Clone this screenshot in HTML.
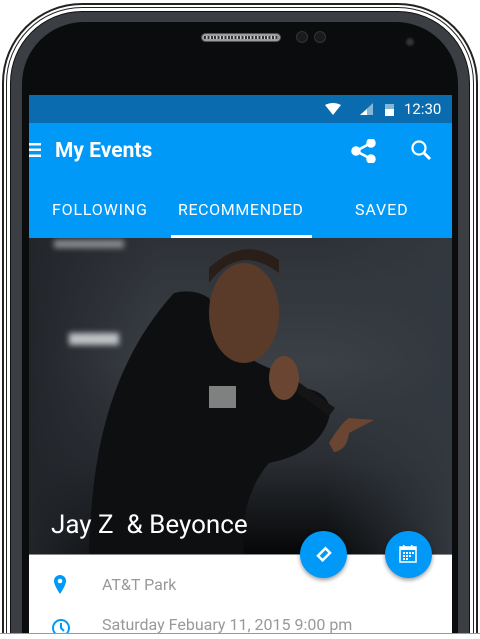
<!DOCTYPE html>
<html style="width:480px;height:639px;overflow:hidden"><head><style>
*{margin:0;padding:0;box-sizing:border-box}
body{width:480px;height:639px;overflow:hidden;background:#fff;position:relative;font-family:"Roboto","Liberation Sans",sans-serif}
.abs{position:absolute}
</style></head><body>
<div class="abs" style="left:0;top:0;width:480px;height:633px;overflow:hidden">
<div class="abs" style="left:2px;top:3px;width:476px;height:630px;border:2px solid #222;border-bottom:none;border-radius:80px 80px 0 0;background:#fff"></div>
<div class="abs" style="left:6px;top:7px;width:468px;height:626px;border:1.5px solid #222;border-bottom:none;border-radius:76px 76px 0 0;background:#fff"></div>
<div class="abs" style="left:10px;top:11px;width:460px;height:622px;border:1.5px solid #111;border-bottom:none;border-radius:72px 72px 0 0;background:#3b3e43"></div>
<div class="abs" style="left:22px;top:22px;width:436px;height:611px;border-radius:62px 62px 0 0;background:#0b0c0e"></div>
<div class="abs" style="left:201px;top:33px;width:80px;height:9px;border-radius:5px;background:#9a9ea3;border:1px solid #555"></div>
<div class="abs" style="left:204px;top:36px;width:74px;height:3px;background:repeating-linear-gradient(90deg,#333 0 2px,#ccc 2px 3.4px)"></div>
<div class="abs" style="left:296px;top:31px;width:12px;height:12px;border-radius:50%;background:#1a1b1e;border:1px solid #333"></div>
<div class="abs" style="left:314px;top:31px;width:12px;height:12px;border-radius:50%;background:#1a1b1e;border:1px solid #333"></div>
<div class="abs" style="left:405px;top:37px;width:10px;height:10px;border-radius:50%;background:#333;border:2px solid #1c1c1c"></div>
<div class="abs" style="left:29px;top:95px;width:423px;height:538px;background:#fff;overflow:hidden">
 <div class="abs" style="left:0;top:0;width:423px;height:28px;background:#0a6bae"></div>
 <svg class="abs" style="left:294px;top:7px" width="80" height="16">
  <path d="M2 3 Q10 -1 18 3 L10 13Z" fill="#fff"/>
  <path d="M37 13 L50 13 L50 1Z" fill="#fff" opacity=".5"/><path d="M37 13 L44 13 L44 7Z" fill="#fff"/>
  <rect x="62" y="2" width="9" height="12" fill="#fff" opacity=".5"/><rect x="62" y="7" width="9" height="7" fill="#fff"/>
 </svg>
 <div class="abs" style="left:375px;top:5px;color:#fff;font-size:15px">12:30</div>
 <div class="abs" style="left:0;top:28px;width:423px;height:115px;background:#0099f7"></div>
 <div class="abs" style="left:0;top:48px;width:12px;height:14px;background:linear-gradient(#fff 0 2.5px,transparent 2.5px 5.5px,#fff 5.5px 8px,transparent 8px 11.5px,#fff 11.5px 14px)"></div>
 <div class="abs" style="left:26px;top:44px;color:#fff;font-size:21px;font-weight:bold">My Events</div>
 <svg class="abs" style="left:322px;top:44px" width="28" height="24"><g fill="#fff" stroke="#fff" stroke-width="2.5"><line x1="5" y1="12" x2="20" y2="4"/><line x1="5" y1="12" x2="20" y2="20"/><circle cx="5" cy="12" r="3.5"/><circle cx="20" cy="4" r="3.5"/><circle cx="20" cy="20" r="3.5"/></g></svg>
 <svg class="abs" style="left:381px;top:44px" width="24" height="24"><circle cx="9" cy="9" r="6.5" fill="none" stroke="#fff" stroke-width="2.2"/><line x1="13.5" y1="13.5" x2="20" y2="20" stroke="#fff" stroke-width="3"/></svg>
 <div class="abs" style="left:23px;top:105px;color:#fff;font-size:16px;letter-spacing:.8px">FOLLOWING</div>
 <div class="abs" style="left:149px;top:105px;color:#fff;font-size:16px;letter-spacing:.6px">RECOMMENDED</div>
 <div class="abs" style="left:326px;top:105px;color:#fff;font-size:16px;letter-spacing:.9px">SAVED</div>
 <div class="abs" style="left:142px;top:140px;width:141px;height:3px;background:#fff"></div>
 <div class="abs" style="left:0;top:143px;width:423px;height:316px;overflow:hidden;background:linear-gradient(180deg,#2e3237 0%,#3b4046 40%,#2a2e33 70%,#060708 100%)">
  <div class="abs" style="left:0;top:0;width:423px;height:316px;background:linear-gradient(90deg,#22252a 0%,transparent 30%,transparent 70%,#32383f 100%)"></div>
  <div class="abs" style="left:40px;top:95px;width:50px;height:12px;background:#bfc2c4;filter:blur(3px)"></div>
  <div class="abs" style="left:25px;top:2px;width:70px;height:8px;background:#8a8d90;filter:blur(3px)"></div>
  <svg class="abs" style="left:0;top:0" width="423" height="316">
   <path d="M145 55 Q165 50 180 60 L195 100 Q215 120 240 130 L275 150 Q305 155 300 180 Q290 215 240 225 Q210 260 215 316 L60 316 Q62 240 75 190 Q95 110 145 55Z" fill="#0e0f11"/>
   <ellipse cx="215" cy="75" rx="35" ry="50" fill="#5a3a28"/>
   <path d="M180 45 Q210 5 250 35 L250 22 Q215 -3 180 30Z" fill="#2a1e18"/>
   <path d="M262 150 L300 178 L306 170 L268 143Z" fill="#151515"/>
   <ellipse cx="255" cy="140" rx="15" ry="22" fill="#6a4632"/>
   <path d="M300 205 Q312 185 320 180 L345 182 L320 195 Q318 212 305 214Z" fill="#6a4632"/>
   <rect x="180" y="148" width="27" height="22" fill="#ccc" opacity=".6"/>
  </svg>
  <div class="abs" style="left:22px;top:272px;color:#fff;font-size:26px">Jay Z &nbsp;&amp; Beyonce</div>
 </div>
 <div class="abs" style="left:0;top:459px;width:423px;height:1px;background:#888"></div>
 <div class="abs" style="left:271px;top:436px;width:47px;height:47px;border-radius:50%;background:#0099f7;box-shadow:0 2px 4px rgba(0,0,0,.4)"></div>
 <svg class="abs" style="left:283px;top:448px" width="24" height="24"><rect x="6" y="7" width="13" height="9" transform="rotate(-45 12 12)" fill="#fff"/><rect x="8.5" y="9.5" width="8" height="4" transform="rotate(-45 12 12)" fill="#0099f7"/></svg>
 <div class="abs" style="left:356px;top:436px;width:47px;height:47px;border-radius:50%;background:#0099f7;box-shadow:0 2px 4px rgba(0,0,0,.4)"></div>
 <svg class="abs" style="left:367px;top:447px" width="24" height="24"><rect x="4" y="5" width="16" height="15" fill="none" stroke="#fff" stroke-width="1.5"/><rect x="4" y="5" width="16" height="3" fill="#fff"/><rect x="7" y="3" width="1.5" height="4" fill="#fff"/><rect x="15" y="3" width="1.5" height="4" fill="#fff"/><g fill="#fff"><rect x="7" y="10" width="2" height="2"/><rect x="10" y="10" width="2" height="2"/><rect x="13" y="10" width="2" height="2"/><rect x="16" y="10" width="2" height="2"/><rect x="7" y="13" width="2" height="2"/><rect x="10" y="13" width="2" height="2"/><rect x="13" y="13" width="2" height="2"/><rect x="7" y="16" width="2" height="2"/><rect x="10" y="16" width="2" height="2"/></g></svg>
 <svg class="abs" style="left:23px;top:479px" width="16" height="22"><path d="M8 1 A6 6 0 0 1 14 7 Q14 11 8 20 Q2 11 2 7 A6 6 0 0 1 8 1Z" fill="#0099f7"/><circle cx="8" cy="7" r="2.3" fill="#fff"/></svg>
 <div class="abs" style="left:73px;top:480px;color:#999;font-size:16px">AT&amp;T Park</div>
 <svg class="abs" style="left:22px;top:523px" width="20" height="15"><circle cx="10" cy="10" r="8" fill="none" stroke="#0099f7" stroke-width="2"/><path d="M10 5 V10 L13 13" fill="none" stroke="#0099f7" stroke-width="2"/></svg>
 <div class="abs" style="left:73px;top:522px;color:#999;font-size:16px;line-height:16px;height:16px;overflow:hidden">Saturday Febuary 11, 2015 9:00 pm</div>
</div>
</div>
<div class="abs" style="left:0;top:633px;width:480px;height:6px;background:#fff;border-top:1px solid #999"></div>
</body></html>
